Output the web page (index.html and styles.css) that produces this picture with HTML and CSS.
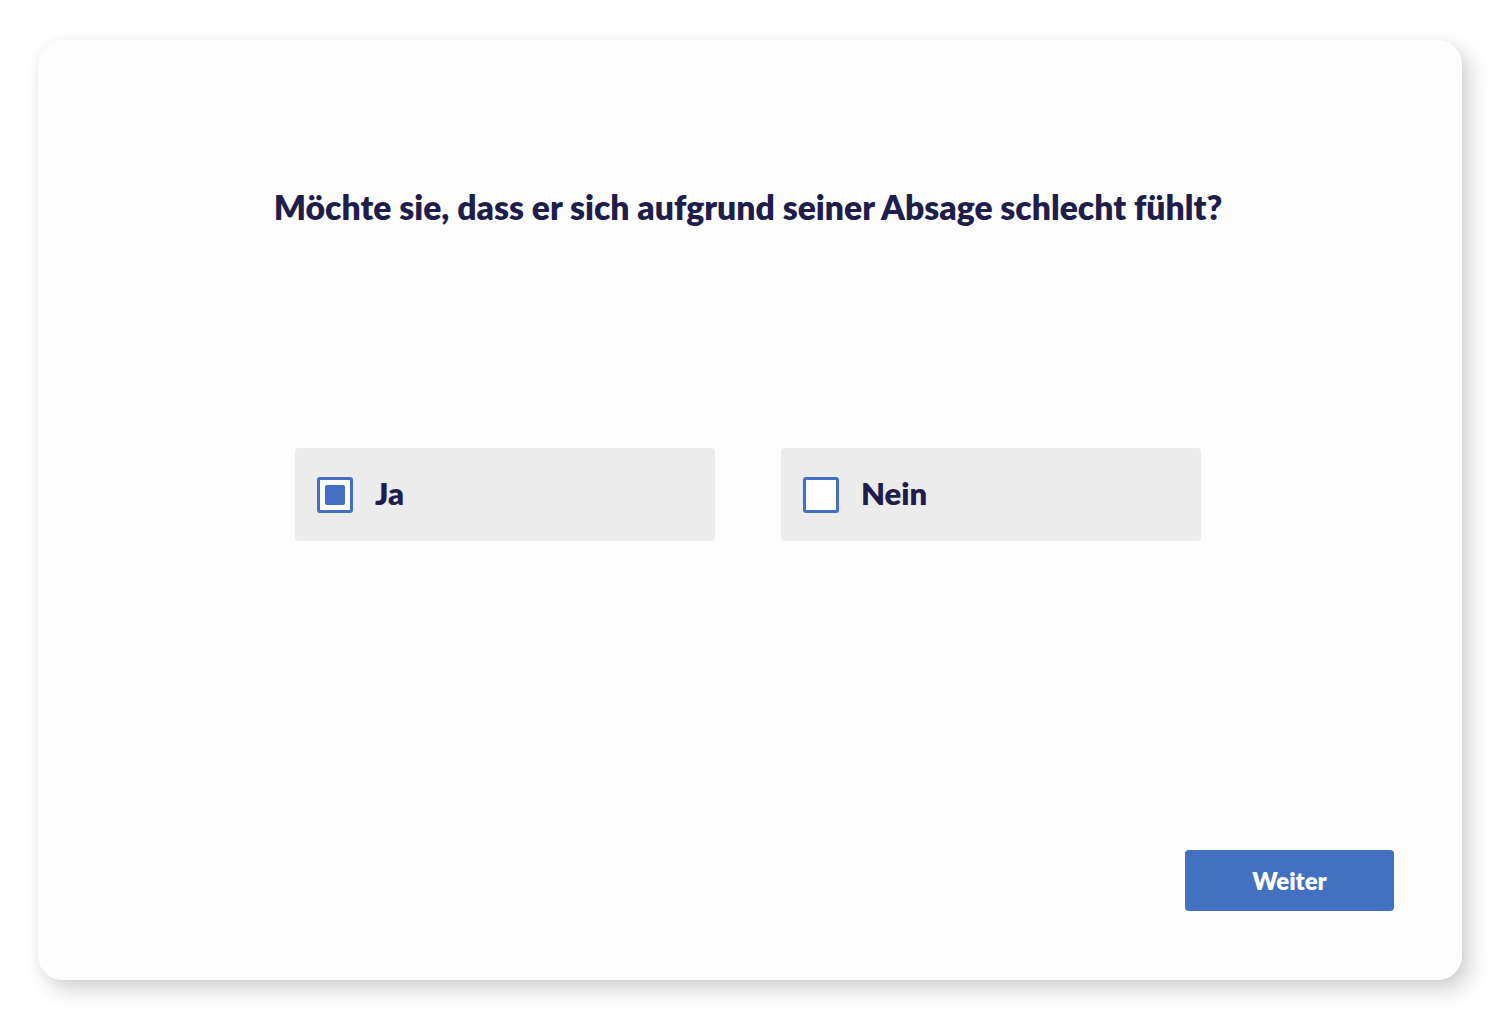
FILE: index.html
```html
<!DOCTYPE html>
<html lang="de">
<head>
<meta charset="utf-8">
<title>Frage</title>
<link rel="stylesheet" href="styles.css">
</head>
<body>
<main class="card">
  <h1 class="question">Möchte sie, dass er sich aufgrund seiner Absage schlecht fühlt?</h1>
  <div class="options">
    <label class="option">
      <span class="box checked"><span class="fill"></span></span>
      <span class="label">Ja</span>
    </label>
    <label class="option">
      <span class="box"></span>
      <span class="label">Nein</span>
    </label>
  </div>
  <div class="actions">
    <button class="next">Weiter</button>
  </div>
</main>
</body>
</html>
```
FILE: styles.css
```css
html, body {
  margin: 0;
  padding: 0;
  background: #ffffff;
}
body {
  padding: 40px 0 41px 38px;
  font-family: Lato, "Open Sans", sans-serif;
}
.card {
  box-sizing: border-box;
  width: 1424px;
  height: 940px;
  background: #fdfdfd;
  border-radius: 24px;
  box-shadow: 8px 10px 22px rgba(0, 0, 0, 0.18), 0 0 8px rgba(0, 0, 0, 0.04);
  display: flex;
  flex-direction: column;
  align-items: center;
  padding: 0 68px 69px 64px;
}
.question {
  margin: 145px 0 0 0;
  font-size: 33.7px;
  line-height: 44px;
  font-weight: 800;
  color: #1f1d4c;
  text-align: center;
}
.options {
  display: flex;
  gap: 66px;
  margin-top: 219px;
}
.option {
  box-sizing: border-box;
  width: 420px;
  height: 93px;
  background: #ececec;
  border-radius: 4px;
  display: flex;
  align-items: center;
  padding-left: 22px;
}
.box {
  box-sizing: border-box;
  width: 36px;
  height: 36px;
  border: 3px solid #4470c4;
  border-radius: 3px;
  background: #ffffff;
  display: flex;
  align-items: center;
  justify-content: center;
}
.fill {
  width: 20px;
  height: 20px;
  background: #4470c4;
  border-radius: 2px;
}
.label {
  margin-left: 22px;
  margin-bottom: 3px;
  font-size: 31px;
  font-weight: 800;
  color: #1f1d4c;
}
.actions {
  margin-top: auto;
  align-self: flex-end;
}
.next {
  width: 209px;
  height: 61px;
  background: #4470c2;
  color: #ffffff;
  border: none;
  border-radius: 4px;
  font-family: Lato, "Open Sans", sans-serif;
  font-size: 24px;
  font-weight: 800;
}
```
